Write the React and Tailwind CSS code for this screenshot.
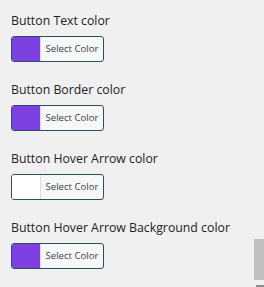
import React from "react";

const items = [
  { label: "Button Text color", color: "#7e3fe0" },
  { label: "Button Border color", color: "#7e3fe0" },
  { label: "Button Hover Arrow color", color: "#ffffff" },
  { label: "Button Hover Arrow Background color", color: "#7e3fe0" },
];

function Picker({ color }) {
  return (
    <button className="flex h-[26px] w-[93px] overflow-hidden rounded-[3px] border border-[#2c4e63] bg-[#f6f7f7] p-0">
      <span className="h-full w-[28px] shrink-0" style={{ background: color }} />
      <span className="flex h-full flex-1 items-center justify-center border-l border-[#dcdcde] text-[9.6px] text-[#3c434a]">
        Select Color
      </span>
    </button>
  );
}

export default function App() {
  return (
    <div className="relative h-[287px] w-[264px] overflow-hidden bg-[#f0f0f0] font-['Open_Sans',sans-serif]">
      <div className="flex flex-col gap-[19px] pl-[11px] pt-[12px]">
        {items.map((it) => (
          <div key={it.label} className="flex flex-col gap-[6px]">
            <div className="text-[12.3px] leading-[18px] text-[#1d2327]">{it.label}</div>
            <Picker color={it.color} />
          </div>
        ))}
      </div>
      <div className="absolute right-0 top-0 h-full w-[11px] bg-[#f0f0f0]">
        <div className="absolute right-0 top-[239px] h-[41px] w-[10px] bg-[#bfbfbf]" />
        <div className="absolute bottom-0 right-0 h-[2px] w-[8px] bg-[#8a8a8a]" />
      </div>
    </div>
  );
}
